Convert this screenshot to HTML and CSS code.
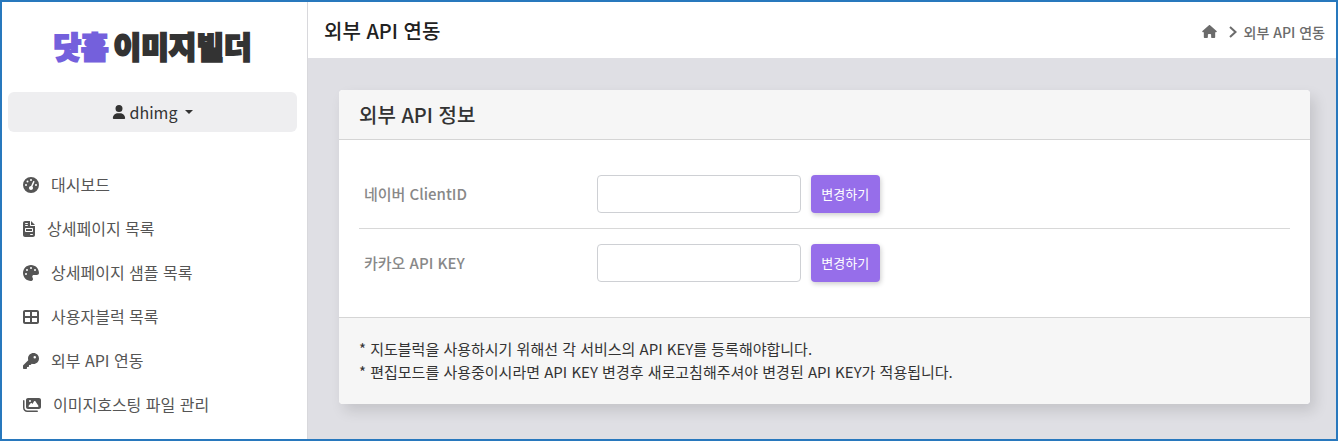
FILE: index.html
```html
<!DOCTYPE html>
<html lang="ko">
<head>
    <meta charset="UTF-8">
    <meta name="viewport" content="width=device-width, initial-scale=1.0">
    <title>외부 API 연동</title>
    <link rel="stylesheet" href="styles.css">
</head>
<body>
<div class="wrapper">
    <aside class="sidebar">
        <a href="#" class="logo"><span class="logo-point">닷홈</span><span>이미지빌더</span></a>
        <button type="button" class="user-btn">
            <svg class="icon" width="14" height="14" viewBox="0 0 448 512"><path d="M224 256A128 128 0 1 0 224 0a128 128 0 1 0 0 256zm-45.700 48C79.800 304 0 383.800 0 482.300C0 498.700 13.300 512 29.700 512H418.300c16.400 0 29.700-13.300 29.700-29.700C448 383.800 368.200 304 269.700 304H178.300z"/></svg>
            <span>dhimg</span>
            <span class="caret"></span>
        </button>
        <nav class="menu">
            <a href="#">
                <svg class="icon" width="16" height="16" viewBox="0 0 512 512"><path d="M0 256a256 256 0 1 1 512 0A256 256 0 1 1 0 256zM288 96a32 32 0 1 0 -64 0 32 32 0 1 0 64 0zM256 416c35.300 0 64-28.700 64-64c0-17.400-6.900-33.100-18.100-44.600L366 161.700c5.300-12.100-.2-26.300-12.300-31.600s-26.300 .2-31.600 12.300L257.900 288c-.6 0-1.300 0-1.900 0c-35.300 0-64 28.700-64 64s28.700 64 64 64zM176 144a32 32 0 1 0 -64 0 32 32 0 1 0 64 0zM96 288a32 32 0 1 0 0-64 32 32 0 1 0 0 64zm352-32a32 32 0 1 0 -64 0 32 32 0 1 0 64 0z"/></svg>
                <span>대시보드</span>
            </a>
            <a href="#">
                <svg class="icon" width="12" height="16" viewBox="0 0 384 512"><path fill-rule="evenodd" d="M64 0C28.700 0 0 28.700 0 64V448c0 35.300 28.700 64 64 64H320c35.300 0 64-28.700 64-64V160H256c-17.700 0-32-14.300-32-32V0H64zM256 0V128H384L256 0zM80 64h64c8.800 0 16 7.200 16 16s-7.200 16-16 16H80c-8.800 0-16-7.200-16-16s7.200-16 16-16zm0 64h64c8.800 0 16 7.200 16 16s-7.200 16-16 16H80c-8.800 0-16-7.200-16-16s7.200-16 16-16zm16 96H288c17.700 0 32 14.300 32 32v64c0 17.700-14.300 32-32 32H96c-17.700 0-32-14.300-32-32V256c0-17.700 14.300-32 32-32zm0 32v64H288V256H96zM240 416h64c8.800 0 16 7.200 16 16s-7.200 16-16 16H240c-8.800 0-16-7.200-16-16s7.200-16 16-16z"/></svg>
                <span>상세페이지 목록</span>
            </a>
            <a href="#">
                <svg class="icon" width="16" height="16" viewBox="0 0 512 512"><path d="M512 256c0 .9 0 1.800 0 2.700c-.4 36.500-33.600 61.300-70.100 61.300H344c-26.500 0-48 21.500-48 48c0 3.400 .4 6.700 1 9.900c2.100 10.200 6.500 20 10.800 29.900c6.100 13.800 12.100 27.500 12.100 42c0 31.800-21.600 60.700-53.400 62c-3.500 .1-7 .2-10.600 .2C114.600 512 0 397.400 0 256S114.600 0 256 0S512 114.600 512 256zM128 288a32 32 0 1 0 -64 0 32 32 0 1 0 64 0zm0-96a32 32 0 1 0 0-64 32 32 0 1 0 0 64zM288 96a32 32 0 1 0 -64 0 32 32 0 1 0 64 0zm96 96a32 32 0 1 0 0-64 32 32 0 1 0 0 64z"/></svg>
                <span>상세페이지 샘플 목록</span>
            </a>
            <a href="#">
                <svg class="icon" width="16" height="16" viewBox="0 0 512 512"><path fill-rule="evenodd" d="M448 96V224H288V96H448zm0 192V416H288V288H448zM224 224H64V96H224V224zM64 288H224V416H64V288zM64 32C28.700 32 0 60.700 0 96V416c0 35.300 28.700 64 64 64H448c35.300 0 64-28.700 64-64V96c0-35.300-28.700-64-64-64H64z"/></svg>
                <span>사용자블럭 목록</span>
            </a>
            <a href="#">
                <svg class="icon" width="16" height="16" viewBox="0 0 512 512"><path fill-rule="evenodd" d="M336 352c97.200 0 176-78.800 176-176S433.200 0 336 0S160 78.800 160 176c0 18.700 2.900 36.800 8.300 53.700L7 391c-4.500 4.500-7 10.600-7 17v80c0 13.300 10.700 24 24 24h80c13.300 0 24-10.700 24-24V448h40c13.300 0 24-10.700 24-24V384h40c6.400 0 12.500-2.500 17-7l33.300-33.300c16.900 5.400 35 8.300 53.700 8.300zM376 96a40 40 0 1 1 0 80 40 40 0 1 1 0-80z"/></svg>
                <span>외부 API 연동</span>
            </a>
            <a href="#">
                <svg class="icon" width="18" height="16" viewBox="0 0 576 512"><path fill-rule="evenodd" d="M160 32c-35.300 0-64 28.700-64 64V320c0 35.300 28.700 64 64 64H512c35.300 0 64-28.700 64-64V96c0-35.300-28.700-64-64-64H160zM396 138.700l96 144c4.900 7.400 5.400 16.800 1.200 24.600S480.900 320 472 320H328 280 200c-9.200 0-17.600-5.300-21.600-13.600s-2.900-18.200 2.900-25.400l64-80c4.600-5.700 11.400-9 18.700-9s14.200 3.300 18.700 9l17.300 21.600 56-84C360.500 132 368 128 376 128s15.500 4 20 10.700zM192 128a32 32 0 1 1 64 0 32 32 0 1 1 -64 0zM48 120c0-13.300-10.700-24-24-24S0 106.700 0 120V344c0 75.100 60.900 136 136 136H456c13.300 0 24-10.700 24-24s-10.700-24-24-24H136c-48.600 0-88-39.400-88-88V120z"/></svg>
                <span>이미지호스팅 파일 관리</span>
            </a>
        </nav>
    </aside>
    <div class="main">
        <header class="topbar">
            <h1>외부 API 연동</h1>
            <div class="breadcrumb">
                <a href="#" aria-label="홈">
                    <svg class="icon" width="15" height="13" viewBox="0 0 576 512"><path d="M575.800 255.500c0 18-15 32.100-32 32.100h-32l.7 160.200V472c0 22.100-17.900 40-40 40H392c-22.100 0-40-17.900-40-40V384c0-17.700-14.300-32-32-32H256c-17.700 0-32 14.300-32 32v88c0 22.100-17.900 40-40 40H104c-22.100 0-40-17.900-40-40V287.600H32c-18 0-32-14-32-32.100c0-9 3-17 10-24L266.400 8c7-7 15-8 22-8s15 2 21 7L564.800 231.500c8 7 12 15 11 24z"/></svg>
                </a>
                <svg class="arrow" width="8" height="12" viewBox="0 0 8 12"><path d="M1 1L6.500 6L1 11"/></svg>
                <span>외부 API 연동</span>
            </div>
        </header>
        <main class="content">
            <section class="card">
                <h2 class="card-header">외부 API 정보</h2>
                <div class="card-body">
                    <table class="form-table">
                        <tr>
                            <th><label for="naver_id">네이버 ClientID</label></th>
                            <td>
                                <div class="field">
                                    <input type="text" id="naver_id">
                                    <button type="button" class="change-btn">변경하기</button>
                                </div>
                            </td>
                        </tr>
                        <tr>
                            <th><label for="kakao_key">카카오 API KEY</label></th>
                            <td>
                                <div class="field">
                                    <input type="text" id="kakao_key">
                                    <button type="button" class="change-btn">변경하기</button>
                                </div>
                            </td>
                        </tr>
                    </table>
                </div>
                <div class="card-footer">
                    * 지도블럭을 사용하시기 위해선 각 서비스의 API KEY를 등록해야합니다.<br>
                    * 편집모드를 사용중이시라면 API KEY 변경후 새로고침해주셔야 변경된 API KEY가 적용됩니다.
                </div>
            </section>
        </main>
    </div>
</div>
</body>
</html>
```
FILE: styles.css
```css
* {
    box-sizing: border-box;
}
body {
    margin: 0;
    font-family: "Noto Sans CJK KR", sans-serif;
    font-size: 15px;
    color: #333;
}
a {
    color: inherit;
    text-decoration: none;
}
button,
input {
    font-family: inherit;
}
.icon {
    flex: none;
    fill: currentColor;
}
.wrapper {
    display: flex;
    min-height: 100vh;
    border: 2px solid #2878bd;
}

/* sidebar */
.sidebar {
    flex: none;
    width: 306px;
    padding: 0 10px 0 6px;
    background: #fff;
    border-right: 1px solid #d8d8dc;
}
.logo {
    display: flex;
    justify-content: center;
    gap: 5px;
    height: 90px;
    line-height: 86px;
    font-size: 30px;
    font-weight: 900;
    color: #333;
    -webkit-text-stroke: 2px currentColor;
}
.logo-point {
    color: #7460dc;
}
.user-btn {
    display: flex;
    align-items: center;
    justify-content: center;
    gap: 4px;
    width: 100%;
    height: 40px;
    border: 0;
    border-radius: 6px;
    background: #eeeef0;
    font-size: 16px;
    color: #333;
}
.caret {
    margin-left: 4px;
    border-top: 4px solid;
    border-left: 4px solid transparent;
    border-right: 4px solid transparent;
}
.menu {
    margin-top: 31px;
}
.menu a {
    display: flex;
    align-items: center;
    gap: 12px;
    height: 44px;
    padding-left: 15px;
    font-size: 16px;
    color: #555;
}
.menu span {
    padding-bottom: 2px;
}

/* main */
.main {
    flex: 1;
    display: flex;
    flex-direction: column;
    min-width: 0;
    background: #dfdfe4;
}
.topbar {
    display: flex;
    align-items: center;
    justify-content: space-between;
    height: 56px;
    padding: 0 11px 0 16px;
    background: #fff;
}
.topbar h1 {
    margin: 0;
    font-size: 20px;
    font-weight: 500;
    color: #212121;
}
.breadcrumb {
    display: flex;
    align-items: center;
    padding-top: 3px;
    font-size: 14px;
    font-weight: 500;
    color: #6b6b6b;
}
.breadcrumb a {
    display: flex;
}
.arrow {
    margin: 0 7px 0 12px;
    fill: none;
    stroke: currentColor;
    stroke-width: 2;
}
.content {
    padding: 32px 26px 32px 31px;
}
.card {
    border-radius: 4px;
    background: #fff;
    box-shadow: 5px 7px 14px rgba(0, 0, 0, 0.12);
}
.card-header {
    height: 50px;
    margin: 0;
    padding: 0 20px;
    border-bottom: 1px solid #d5d5d5;
    border-radius: 4px 4px 0 0;
    background: #f6f6f6;
    font-size: 20px;
    font-weight: 500;
    line-height: 49px;
}
.card-body {
    padding: 20px;
}
.form-table {
    width: 100%;
    border-collapse: collapse;
}
.form-table th,
.form-table td {
    padding: 15px 5px;
}
.form-table th {
    width: 25%;
    padding: 14px 5px 16px;
    text-align: left;
    font-weight: 500;
    color: #888;
}
.form-table tr + tr {
    border-top: 1px solid #d8d8d8;
}
.field {
    display: flex;
    gap: 10px;
}
.field input {
    width: 204px;
    height: 38px;
    padding: 6px 12px;
    border: 1px solid #ced0d4;
    border-radius: 4px;
    background: #fff;
}
.change-btn {
    width: 69px;
    height: 38px;
    padding: 0 0 2px;
    border: 0;
    border-radius: 4px;
    background: #966eea;
    box-shadow: 1px 2px 5px rgba(0, 0, 0, 0.2);
    font-size: 13px;
    color: #fff;
}
.card-footer {
    padding: 19px 20px 21px;
    border-top: 1px solid #d5d5d5;
    border-radius: 0 0 4px 4px;
    background: #f6f6f6;
    line-height: 23px;
}
```
